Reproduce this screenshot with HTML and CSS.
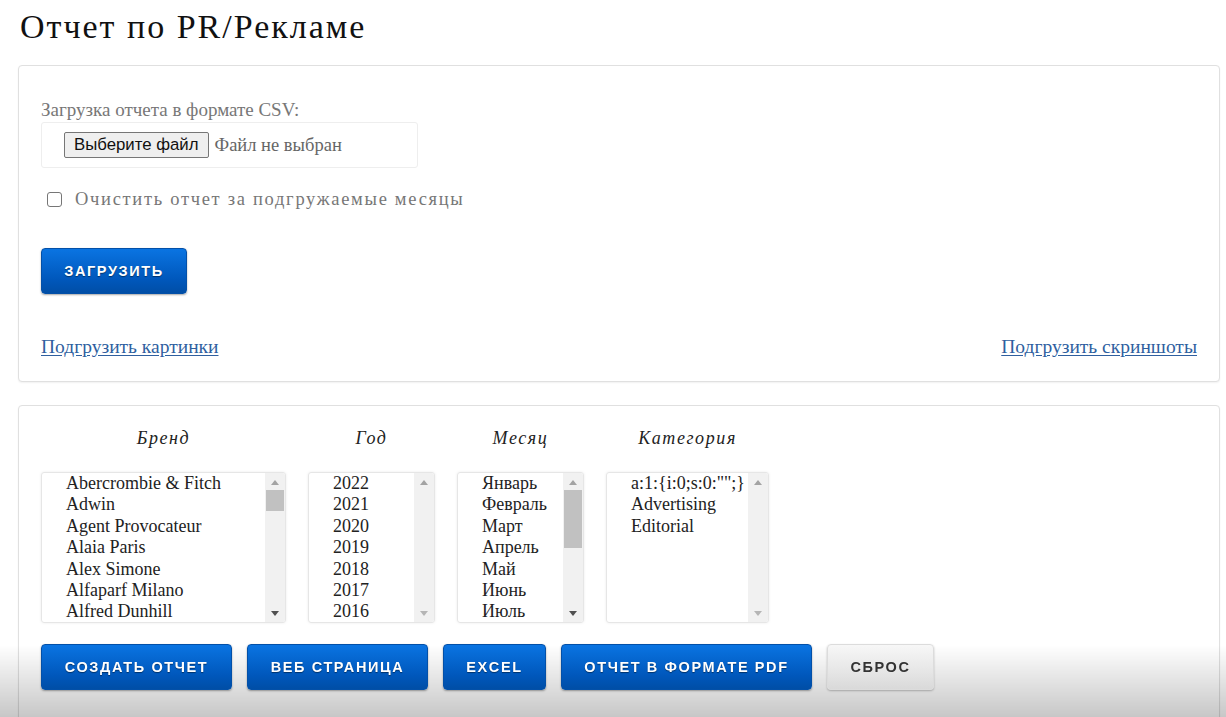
FILE: index.html
```html
<!DOCTYPE html>
<html lang="ru">
<head>
<meta charset="utf-8">
<title>Отчет по PR/Рекламе</title>
<link rel="stylesheet" href="styles.css">
</head>
<body>
<div class="page">
  <h1 class="title">Отчет по PR/Рекламе</h1>

  <section class="card upload-card">
    <div class="field-label">Загрузка отчета в формате CSV:</div>
    <div class="file-box">
      <span class="file-btn">Выберите файл</span>
      <span class="file-name">Файл не выбран</span>
    </div>
    <label class="check-row">
      <span class="checkbox"></span>
      <span class="check-text">Очистить отчет за подгружаемые месяцы</span>
    </label>
    <div class="upload-row">
      <button class="btn btn-blue">Загрузить</button>
    </div>
    <div class="links-row">
      <a class="link" href="#">Подгрузить картинки</a>
      <a class="link" href="#">Подгрузить скриншоты</a>
    </div>
  </section>

  <section class="card filter-card">
    <div class="filters">
      <div class="filter col-brand">
        <div class="filter-label">Бренд</div>
        <div class="listbox">
          <ul class="options">
            <li>Abercrombie &amp; Fitch</li>
            <li>Adwin</li>
            <li>Agent Provocateur</li>
            <li>Alaia Paris</li>
            <li>Alex Simone</li>
            <li>Alfaparf Milano</li>
            <li>Alfred Dunhill</li>
          </ul>
          <div class="scrollbar">
            <span class="arrow up"></span>
            <div class="track"><span class="thumb thumb-brand"></span></div>
            <span class="arrow down"></span>
          </div>
        </div>
      </div>
      <div class="filter col-year">
        <div class="filter-label">Год</div>
        <div class="listbox">
          <ul class="options">
            <li>2022</li>
            <li>2021</li>
            <li>2020</li>
            <li>2019</li>
            <li>2018</li>
            <li>2017</li>
            <li>2016</li>
          </ul>
          <div class="scrollbar faded">
            <span class="arrow up"></span>
            <div class="track"></div>
            <span class="arrow down"></span>
          </div>
        </div>
      </div>
      <div class="filter col-month">
        <div class="filter-label">Месяц</div>
        <div class="listbox">
          <ul class="options">
            <li>Январь</li>
            <li>Февраль</li>
            <li>Март</li>
            <li>Апрель</li>
            <li>Май</li>
            <li>Июнь</li>
            <li>Июль</li>
          </ul>
          <div class="scrollbar">
            <span class="arrow up"></span>
            <div class="track"><span class="thumb thumb-month"></span></div>
            <span class="arrow down"></span>
          </div>
        </div>
      </div>
      <div class="filter col-cat">
        <div class="filter-label">Категория</div>
        <div class="listbox">
          <ul class="options">
            <li>a:1:{i:0;s:0:"";}</li>
            <li>Advertising</li>
            <li>Editorial</li>
          </ul>
          <div class="scrollbar faded">
            <span class="arrow up"></span>
            <div class="track"></div>
            <span class="arrow down"></span>
          </div>
        </div>
      </div>
    </div>
    <div class="actions">
      <button class="btn btn-blue w-create">Создать отчет</button>
      <button class="btn btn-blue w-web">Веб страница</button>
      <button class="btn btn-blue w-excel">Excel</button>
      <button class="btn btn-blue w-pdf">Отчет в формате PDF</button>
      <button class="btn btn-gray w-reset">Сброс</button>
    </div>
  </section>
</div>
<div class="bottom-shade"></div>
</body>
</html>
```

FILE: styles.css
```css
* { box-sizing: border-box; }
html, body { margin: 0; padding: 0; }
body {
  background: #fff;
  font-family: "Liberation Serif", "DejaVu Serif", serif;
  color: #222;
  overflow: hidden;
  height: 717px;
}
.page {
  padding: 0 6px 0 18px;
}
.title {
  margin: 0;
  padding: 8px 0 0 2px;
  height: 65px;
  font-weight: normal;
  font-size: 34px;
  letter-spacing: 2px;
  color: #111;
}
.card {
  border: 1px solid #e0e0e0;
  border-radius: 4px;
  background: #fff;
  box-shadow: 0 1px 2px rgba(0,0,0,0.06);
}
.upload-card {
  padding: 33px 22px 22px 22px;
  height: 317px;
  margin-bottom: 23px;
}
.field-label {
  font-size: 19px;
  color: #777;
  line-height: 22px;
}
.file-box {
  margin-top: 1px;
  width: 377px;
  height: 46px;
  border: 1px solid #eee;
  border-radius: 3px;
  display: flex;
  align-items: center;
  padding-left: 22px;
  gap: 6px;
}
.file-btn {
  font-family: "Liberation Sans", Arial, sans-serif;
  font-size: 16.8px;
  color: #111;
  background: #efefef;
  border: 1px solid #767676;
  border-radius: 2px;
  height: 26px;
  padding: 0 9px;
  display: flex;
  align-items: center;
}
.file-name {
  font-size: 18.5px;
  color: #666;
}
.check-row {
  display: flex;
  align-items: center;
  margin-top: 22px;
  padding-left: 6px;
  gap: 13px;
  height: 18px;
}
.checkbox {
  width: 15px;
  height: 15px;
  border: 1px solid #767676;
  border-radius: 3px;
  background: #fff;
}
.check-text {
  font-size: 18.5px;
  color: #777;
  letter-spacing: 1.7px;
}
.upload-row {
  margin-top: 40px;
}
.btn {
  height: 46px;
  border: 1px solid #0350a8;
  border-radius: 4px;
  background: linear-gradient(#0a74e2, #0057bb 70%, #004ea6);
  color: #fff;
  font-family: "Liberation Sans", Arial, sans-serif;
  font-weight: bold;
  font-size: 14.5px;
  letter-spacing: 1.6px;
  text-transform: uppercase;
  text-shadow: 0 1px 1px rgba(0,0,0,0.45);
  box-shadow: 0 1px 2px rgba(0,0,0,0.35);
  padding: 0;
  cursor: pointer;
}
.upload-row .btn { width: 146px; }
.btn-gray {
  background: linear-gradient(#f7f7f7, #e6e6e6 60%, #d9d9d9);
  border: 1px solid #dcdcdc;
  color: #333;
  text-shadow: none;
  box-shadow: 0 1px 2px rgba(0,0,0,0.25);
}
.links-row {
  display: flex;
  justify-content: space-between;
  margin-top: 42px;
}
.link {
  font-size: 19.5px;
  color: #2f5f9f;
  text-decoration: underline;
  text-underline-offset: 2px;
}
.filter-card {
  padding: 18px 22px 30px 22px;
  height: 340px;
}
.filters {
  display: flex;
  gap: 22px;
}
.filter-label {
  text-align: center;
  font-style: italic;
  font-size: 18px;
  letter-spacing: 1.6px;
  color: #222;
  height: 34px;
  margin-top: 4px;
}
.listbox {
  margin-top: 10px;
  height: 151px;
  border: 1px solid #e6e6e6;
  border-radius: 3px;
  box-shadow: 0 0 3px rgba(0,0,0,0.08);
  display: flex;
  overflow: hidden;
}
.options {
  list-style: none;
  margin: 0;
  padding: 0 0 0 24px;
  flex: 1;
  font-size: 18px;
  line-height: 21.4px;
  color: #222;
  white-space: nowrap;
  overflow: hidden;
}
.scrollbar {
  width: 20px;
  background: #f1f1f1;
  display: flex;
  flex-direction: column;
  align-items: center;
  padding: 0 1px;
}
.arrow {
  width: 0; height: 0;
  border-left: 4.5px solid transparent;
  border-right: 4.5px solid transparent;
  margin: 7px 0 6px;
}
.arrow.up { border-bottom: 5px solid #a3a3a3; }
.arrow.down { border-top: 5px solid #505050; }
.faded .arrow.down { border-top-color: #b5b5b5; }
.track { flex: 1; width: 100%; }
.thumb { display: block; width: 100%; background: #c1c1c1; }
.thumb-brand { height: 21px; margin-top: -1px; }
.thumb-month { height: 58px; margin-top: -1px; }
.col-brand { width: 245px; }
.col-year { width: 127px; }
.col-month { width: 127px; }
.col-cat { width: 163px; }
.actions {
  display: flex;
  gap: 15px;
  margin-top: 21px;
  position: relative;
  z-index: 2;
}
.w-create { width: 191px; }
.w-web { width: 181px; }
.w-excel { width: 103px; }
.w-pdf { width: 251px; }
.w-reset { width: 107px; }
.bottom-shade {
  position: fixed;
  left: 0; right: 0; bottom: 0;
  height: 72px;
  background: linear-gradient(rgba(0,0,0,0), rgba(0,0,0,0.22));
  pointer-events: none;
  z-index: 1;
}
```
